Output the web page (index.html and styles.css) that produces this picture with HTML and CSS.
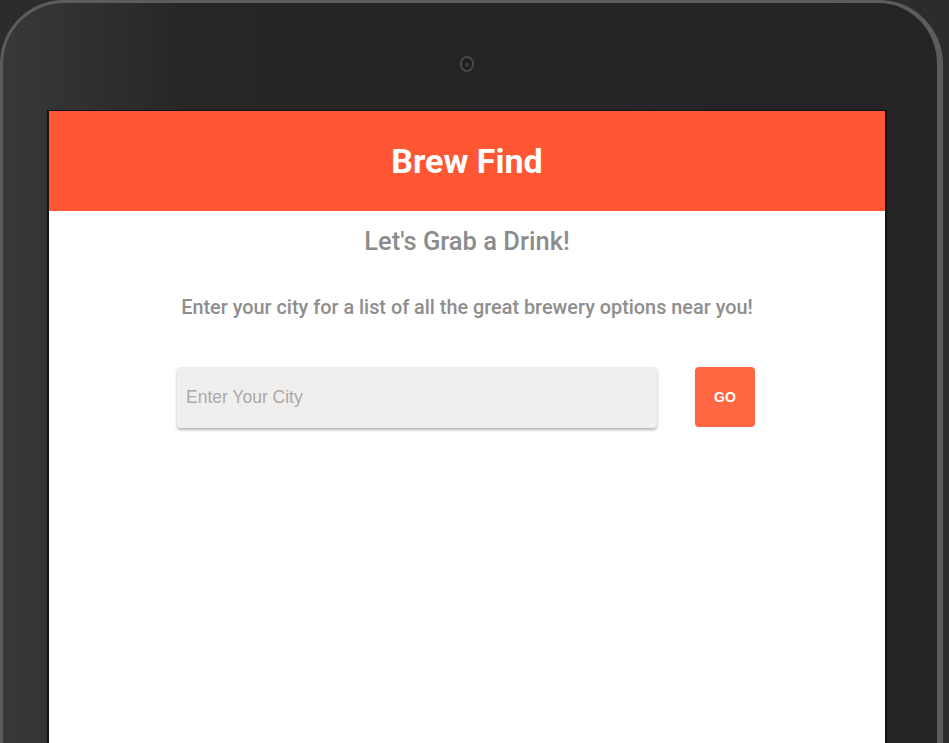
FILE: index.html
```html
<!DOCTYPE html>
<html>
<head>
<meta charset="utf-8">
<link rel="stylesheet" href="styles.css">
</head>
<body>
<div class="device">
  <div class="bezel-top">
    <div class="camera"><div class="lens"></div></div>
  </div>
  <div class="screen">
    <header class="app-header">
      <h1 class="title">Brew Find</h1>
    </header>
    <main class="content">
      <h2 class="heading">Let's Grab a Drink!</h2>
      <p class="lead">Enter your city for a list of all the great brewery options near you!</p>
      <form class="search">
        <input class="city" type="text" placeholder="Enter Your City">
        <button class="go" type="button">GO</button>
      </form>
    </main>
  </div>
</div>
</body>
</html>
```
FILE: styles.css
```css
html, body {
  margin: 0;
  padding: 0;
  height: 100%;
  overflow: hidden;
}
body {
  background: #2c2c2c;
}
.device {
  width: 943px;
  height: 900px;
  box-sizing: border-box;
  border: 3px solid #5c5c5e;
  border-right-width: 6px;
  border-bottom: none;
  border-radius: 64px 64px 0 0;
  background: linear-gradient(90deg, #383838 0%, #262626 20%, #242326 100%);
  padding: 0 50px 0 44px;
}
.bezel-top {
  height: 107px;
  display: flex;
  justify-content: center;
  align-items: flex-start;
  box-sizing: border-box;
}
.camera {
  margin-top: 53px;
  width: 14px;
  height: 16px;
  box-sizing: border-box;
  border: 2px solid #48474c;
  border-radius: 50%;
  background: #1d1c1f;
  display: flex;
  align-items: center;
  justify-content: center;
}
.lens {
  width: 4px;
  height: 5px;
  border-radius: 50%;
  background: #3a393e;
}
.screen {
  border: 1px solid #111;
  border-width: 1px 2px 0 2px;
  background: #fff;
  height: 800px;
}
.app-header {
  background: #ff5733;
  height: 100px;
  display: flex;
  align-items: center;
  justify-content: center;
}
.title {
  margin: 0;
  color: #fff;
  font-family: Roboto, "Liberation Sans", sans-serif;
  font-weight: 700;
  font-size: 34px;
  letter-spacing: 0;
}
.content {
  display: flex;
  flex-direction: column;
  align-items: center;
  font-family: Roboto, "Liberation Sans", sans-serif;
}
.heading {
  margin: 15px 0 0;
  color: #8c8c8c;
  font-weight: 500;
  font-size: 25.5px;
  line-height: 30px;
}
.lead {
  margin: 40px 0 0;
  color: #8e8e8e;
  font-weight: 500;
  font-size: 19.85px;
  line-height: 24px;
}
.search {
  margin: 47px 0 0 -2px;
  display: flex;
  gap: 38px;
  align-items: flex-start;
}
.city {
  width: 480px;
  height: 61px;
  box-sizing: border-box;
  border: none;
  border-radius: 4px;
  background: #f0efee;
  box-shadow: 0 2px 3px rgba(0, 0, 0, 0.3);
  padding: 0 9px;
  font-family: "Liberation Sans", Arial, sans-serif;
  font-size: 17.5px;
  color: #555;
  outline: none;
}
.city::placeholder {
  color: #a9a9a9;
}
.go {
  width: 60px;
  height: 60px;
  border: none;
  border-radius: 4px;
  background: #ff6641;
  color: #fff;
  font-family: "Liberation Sans", Arial, sans-serif;
  font-weight: 700;
  font-size: 14px;
  padding: 0;
}
```
